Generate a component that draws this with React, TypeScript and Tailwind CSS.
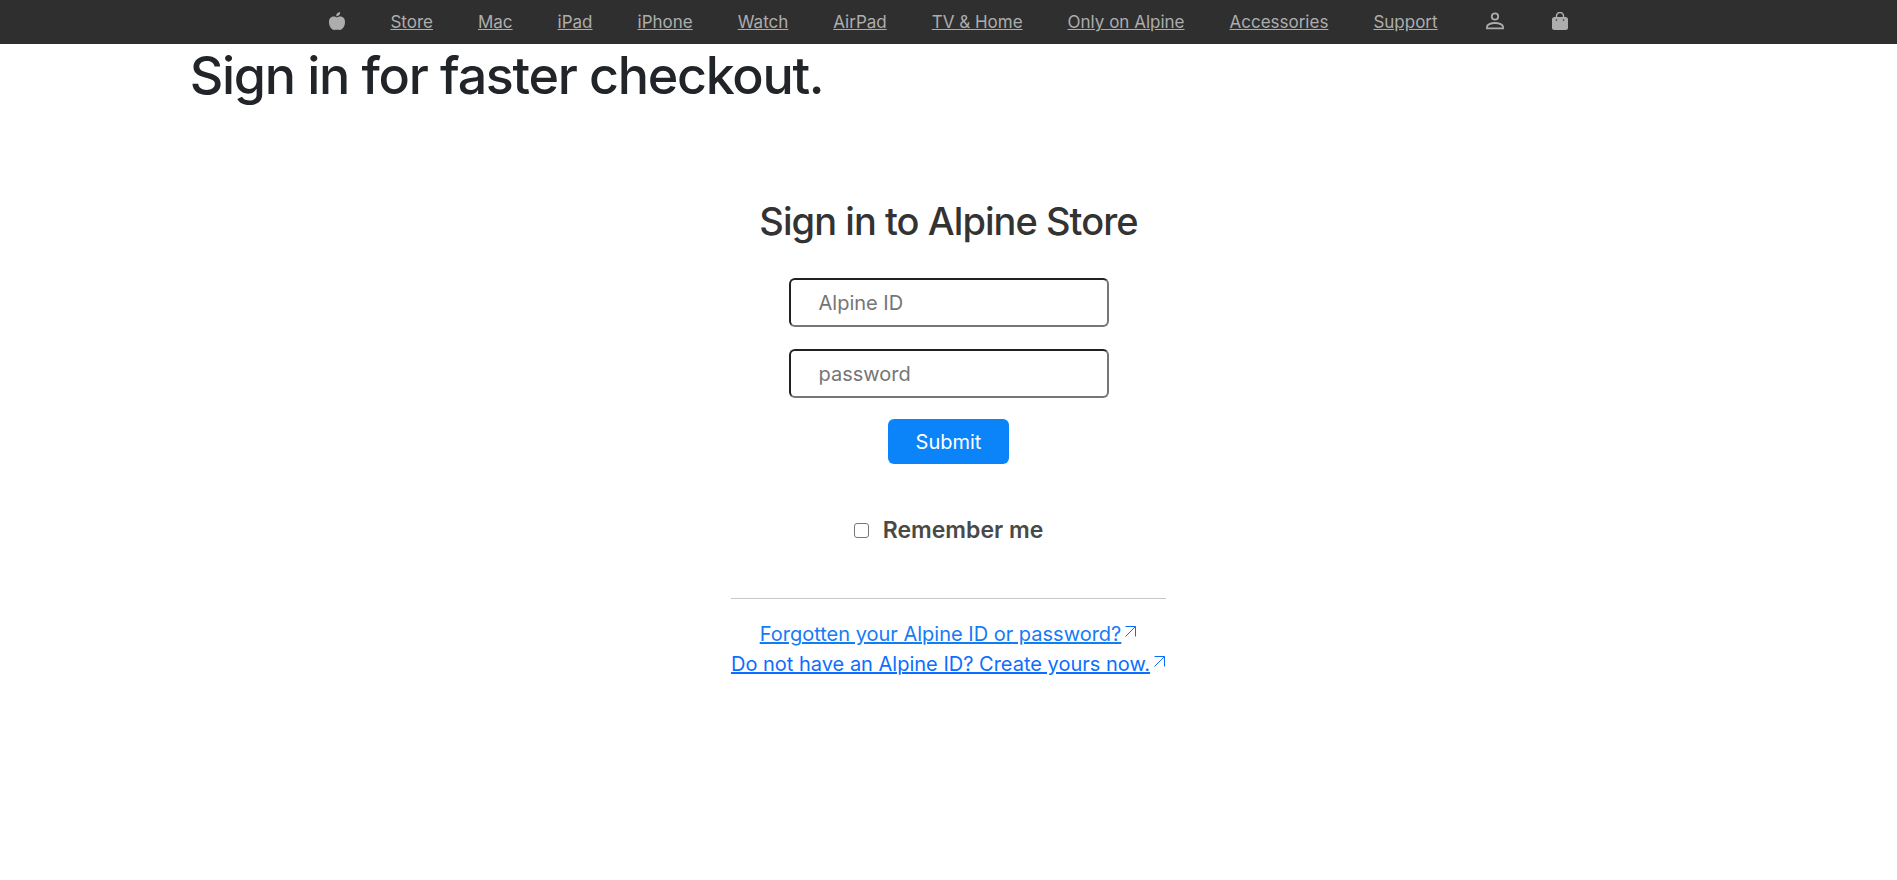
import React from "react";

const links = ["Store", "Mac", "iPad", "iPhone", "Watch", "AirPad", "TV & Home", "Only on Alpine", "Accessories", "Support"];

function Arrow() {
  return (
    <svg viewBox="0 0 12 12" className="ml-1 inline-block h-3 w-3 align-[4px]" fill="none" stroke="currentColor" aria-hidden="true">
      <path d="M.5 1.5H10.5V11.5M10.5 1.5L.5 11.5" />
    </svg>
  );
}

const fieldClass =
  "h-[49px] w-80 rounded-md border-2 border-t-[#212121] border-l-[#212121] border-r-[#767676] border-b-[#767676] bg-white px-7 text-[20px] text-[#212529] placeholder:text-[#757575]";

export default function App() {
  return (
    <div className="min-h-screen bg-white font-[Inter,'Noto_Sans',sans-serif] text-[#212529]">
      <nav className="flex h-11 items-center justify-center gap-[45px] bg-[#2f2f2f] text-[17px] text-[#adadad]">
        <a href="#" aria-label="Alpine home">
          <svg viewBox="0 1 16 20" className="h-5 w-4" fill="currentColor" aria-hidden="true">
            <path d="M7.2 5.3C7 2.8 8.8 1.2 11.2 1C11.3 3.4 9.8 5.2 7.2 5.3Z" />
            <path d="M8 6.4C9.1 6.2 10 5.6 11.4 5.6C14.2 5.6 16 7.8 16 11.3C16 15.2 13.5 19 10.8 19C9.7 19 9 18.8 8 18.8S6.3 19 5.2 19C2.5 19 0 15.2 0 11.3C0 7.8 1.8 5.6 4.6 5.6C6 5.6 6.9 6.2 8 6.4Z" />
          </svg>
        </a>
        {links.map((label) => (
          <a key={label} href="#" className="pt-0.5 whitespace-nowrap underline">{label}</a>
        ))}
        <a href="#" aria-label="Account" className="flex w-6 justify-center">
          <svg viewBox="0 1 20 20" className="h-5 w-5" fill="none" stroke="currentColor" strokeWidth="1.8" aria-hidden="true">
            <circle cx="10" cy="5.5" r="3.2" />
            <path d="M2 17.3V15.8C2 13.6 5.5 12 10 12S18 13.6 18 15.8V17.3Z" />
          </svg>
        </a>
        <a href="#" aria-label="Shopping bag">
          <svg viewBox="0 1 16 20" className="h-5 w-4" aria-hidden="true">
            <path d="M4.5 8V5A3.5 3.5 0 0 1 11.5 5V8" fill="none" stroke="currentColor" strokeWidth="1.6" />
            <rect y="6" width="16" height="13" rx="2.5" fill="currentColor" />
            <circle cx="4.5" cy="9" r=".8" fill="#2f2f2f" />
            <circle cx="11.5" cy="9" r=".8" fill="#2f2f2f" />
          </svg>
        </a>
      </nav>
      <main>
        <h1 className="mx-[10%] mt-1 text-[52px] leading-[56px] font-medium tracking-tight">Sign in for faster checkout.</h1>
        <section className="mt-[93px] flex flex-col items-center">
          <h2 className="text-[38px] leading-12 font-medium tracking-tight text-[#333]">Sign in to Alpine Store</h2>
          <form className="mt-[33px] flex flex-col items-center" onSubmit={(e) => e.preventDefault()}>
            <input type="text" aria-label="Alpine ID" placeholder="Alpine ID" className={fieldClass} />
            <input type="password" aria-label="password" placeholder="password" className={`mt-[22px] ${fieldClass}`} />
            <button type="submit" className="mt-[21px] h-[45px] rounded-md bg-[#0a84f8] px-7 text-[20px] text-white">Submit</button>
            <label className="mt-[50px] flex items-center gap-[14px] text-[23px] leading-8 font-semibold text-[#494949]">
              <input type="checkbox" className="h-[15px] w-[15px] appearance-none rounded-[3px] border border-[#767676] bg-white checked:bg-[#0a84f8]" />
              Remember me
            </label>
          </form>
          <div className="mt-[52px] border-t border-[#c8c8c8] pt-5 text-center text-[20px] leading-[30px] text-[#0d6efd]">
            <p><a href="#" className="text-[#147bf6] underline decoration-2">Forgotten your Alpine ID or password?</a><Arrow /></p>
            <p><a href="#" className="underline decoration-2">Do not have an Alpine ID? Create yours now.</a><Arrow /></p>
          </div>
        </section>
      </main>
    </div>
  );
}
